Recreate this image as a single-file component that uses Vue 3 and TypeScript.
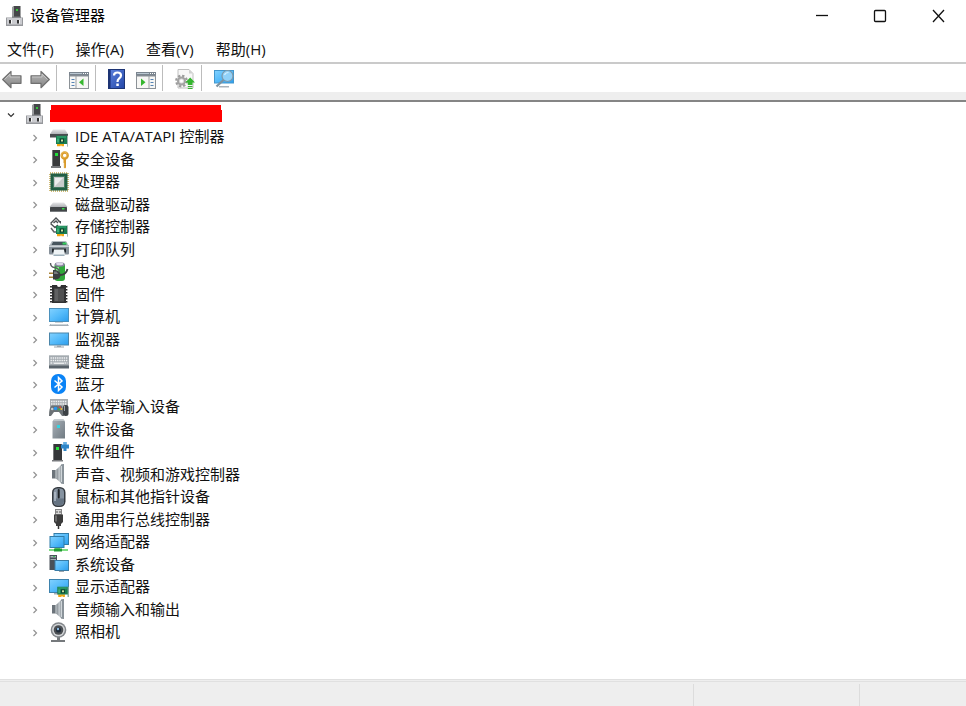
<script setup lang="ts">
import { ref } from 'vue'

interface Device {
  name: string
  icon: string
}

interface Tool {
  name: string
  icon: string
}

const menus: string[] = ['文件(F)', '操作(A)', '查看(V)', '帮助(H)']

const toolGroups: Tool[][] = [
  [
    { name: '后退', icon: 'back' },
    { name: '前进', icon: 'forward' },
  ],
  [{ name: '显示/隐藏控制台树', icon: 'pane-left' }],
  [
    { name: '帮助', icon: 'help' },
    { name: '显示/隐藏操作窗格', icon: 'pane-right' },
  ],
  [{ name: '更新驱动程序', icon: 'update' }],
  [{ name: '扫描检测硬件改动', icon: 'scan' }],
]

const devices: Device[] = [
  { name: 'IDE ATA/ATAPI 控制器', icon: 'ide' },
  { name: '安全设备', icon: 'security' },
  { name: '处理器', icon: 'cpu' },
  { name: '磁盘驱动器', icon: 'disk' },
  { name: '存储控制器', icon: 'storage' },
  { name: '打印队列', icon: 'printer' },
  { name: '电池', icon: 'battery' },
  { name: '固件', icon: 'firmware' },
  { name: '计算机', icon: 'computer' },
  { name: '监视器', icon: 'monitor' },
  { name: '键盘', icon: 'keyboard' },
  { name: '蓝牙', icon: 'bluetooth' },
  { name: '人体学输入设备', icon: 'hid' },
  { name: '软件设备', icon: 'soft-device' },
  { name: '软件组件', icon: 'soft-component' },
  { name: '声音、视频和游戏控制器', icon: 'speaker' },
  { name: '鼠标和其他指针设备', icon: 'mouse' },
  { name: '通用串行总线控制器', icon: 'usb' },
  { name: '网络适配器', icon: 'network' },
  { name: '系统设备', icon: 'system' },
  { name: '显示适配器', icon: 'display' },
  { name: '音频输入和输出', icon: 'speaker' },
  { name: '照相机', icon: 'camera' },
]

const open = ref<boolean>(true)
</script>

<template>
  <div class="window">
    <svg class="sprite" aria-hidden="true">
      <defs>
        <linearGradient id="g-screen" x1="0" y1="0" x2="1" y2="1">
          <stop offset="0" stop-color="#7fd0ff" />
          <stop offset="0.5" stop-color="#55bbfa" />
          <stop offset="1" stop-color="#2e9fee" />
        </linearGradient>
        <linearGradient id="g-metal" x1="0" y1="0" x2="0" y2="1">
          <stop offset="0" stop-color="#e6e6e8" />
          <stop offset="1" stop-color="#b0b2b6" />
        </linearGradient>
        <linearGradient id="g-slate" x1="0" y1="0" x2="1" y2="1">
          <stop offset="0" stop-color="#a9b1b8" />
          <stop offset="1" stop-color="#707a82" />
        </linearGradient>
        <linearGradient id="g-arrow" x1="0" y1="0" x2="0" y2="1">
          <stop offset="0" stop-color="#b8b8b8" />
          <stop offset="1" stop-color="#858585" />
        </linearGradient>
        <linearGradient id="g-help" x1="0" y1="0" x2="1" y2="1">
          <stop offset="0" stop-color="#5b80dc" />
          <stop offset="1" stop-color="#2447a8" />
        </linearGradient>
        <linearGradient id="g-cone" x1="0" y1="0" x2="1" y2="0">
          <stop offset="0" stop-color="#737b82" />
          <stop offset="0.6" stop-color="#c4cace" />
          <stop offset="1" stop-color="#8c949a" />
        </linearGradient>

        <symbol id="manager" viewBox="0 0 20 20">
          <path d="M9 1l1-1h6.500v11H9z" fill="#454749" />
          <path d="M8 1l2-1v11H8z" fill="#9a9c9e" />
          <rect x="12" y="3" width="2" height="2" fill="#37c53c" />
          <path d="M8 10.500h9V12H8z" fill="#7b7d80" />
          <rect x="2" y="11.500" width="17" height="8.500" fill="#96989c" />
          <rect x="3" y="12" width="15" height="6.500" fill="#cbccd0" />
          <path d="M5 14h2v3.500H5zM13 14h2v3.500h-2z" fill="#333" />
          <path d="M7 14h1v3.500H7zM15 14h1v3.500h-1z" fill="#f7f7f7" />
        </symbol>

        <symbol id="card" viewBox="0 0 12 11">
          <path d="M1 8h7v3H5.500v-1H4.500v1H1z" fill="#f0a715" />
          <path d="M0 0h12v11h-1V8.500H0z" fill="#187e50" />
          <path d="M1 1h9v1H1zM1 3h2v4H1z" fill="#3dae78" />
          <rect x="4" y="3" width="4" height="4" fill="#0d4230" />
          <rect x="5" y="4" width="2" height="2" fill="#c9e7a1" />
          <path d="M11 0h1v11h-1z" fill="#a9b4b1" />
        </symbol>

        <symbol id="ide" viewBox="0 0 20 20">
          <path d="M4 2.500h12l3 4.500H1z" fill="url(#g-metal)" />
          <path d="M1 7h18v3.500H1z" fill="#4a4d50" />
          <use href="#card" x="7" y="8.500" width="12" height="11" />
        </symbol>

        <symbol id="security" viewBox="0 0 20 20">
          <path d="M3 1h8v16H3z" fill="#393b3d" />
          <path d="M3 1h1v16H3z" fill="#77797b" />
          <path d="M2 17h10v2H2z" fill="#77797c" />
          <rect x="6" y="4" width="3" height="3" fill="#21dd39" />
          <path d="M14.500 9.500h2.500v9l-1 1-1.500-1.500 1-1-1-1 1-1-1-1z" fill="#d99b2b" />
          <circle cx="15.700" cy="6.500" r="3" fill="none" stroke="#d99b2b" stroke-width="2.400" />
          <circle cx="15.200" cy="5.700" r="2.800" fill="none" stroke="#f5c96d" stroke-width="0.600" />
        </symbol>

        <symbol id="cpu" viewBox="0 0 20 20">
          <rect x="1" y="1" width="18" height="18" fill="none" stroke="#c2a64e" stroke-width="1.500" stroke-dasharray="1 1" />
          <rect x="1.500" y="1.500" width="17" height="17" fill="#235f45" />
          <rect x="4" y="4" width="12" height="12" fill="#447a61" />
          <rect x="5" y="5" width="10" height="10" fill="#c8cbcb" />
          <path d="M6 6h8l-8 8z" fill="#eceeee" />
        </symbol>

        <symbol id="disk" viewBox="0 0 20 20">
          <path d="M4 8.500h11l3.500 4.500H.5z" fill="url(#g-metal)" />
          <rect x="1" y="13" width="17" height="5" rx="0.500" fill="#424548" />
          <path d="M1 17h17v1H1z" fill="#777b7e" />
          <rect x="13" y="14" width="2.500" height="1.500" fill="#32df49" />
        </symbol>

        <symbol id="storage" viewBox="0 0 20 20">
          <path d="M1.500 6.500L7 1l4 4M1.500 6.500L6 10.500 9 8M4.500 6L7 4l2 2" fill="none" stroke="#4d5154" stroke-width="1.400" />
          <path d="M2 11l3 4h3" fill="none" stroke="#606468" stroke-width="1.500" />
          <path d="M9 4h3v3z" fill="#4d5154" />
          <use href="#card" x="7" y="8.500" width="12" height="11" />
        </symbol>

        <symbol id="printer" viewBox="0 0 20 20">
          <rect x="0" y="6" width="20" height="9.500" rx="1" fill="#87919a" />
          <path d="M3 2h14l3 5H0z" fill="#b3bbc0" />
          <path d="M4 3h12l1.500 3h-15z" fill="#46545c" />
          <rect x="13.500" y="3.500" width="4" height="2" fill="#33cf5b" />
          <path d="M0 7h20v1H0z" fill="#cbd2d6" />
          <path d="M3 9.500h14v4H3z" fill="#20282d" />
          <path d="M5 10.500h10l1 6H4z" fill="#eef3f5" />
          <path d="M4.500 15.500h11v1.500h-11z" fill="#9eb0bb" />
        </symbol>

        <symbol id="battery" viewBox="0 0 20 20">
          <rect x="5.500" y="1" width="10.500" height="18" rx="3" fill="#2fa83a" />
          <path d="M7 5h3v10H7z" fill="#8bea8b" />
          <ellipse cx="10.700" cy="2.500" rx="5" ry="2.200" fill="#8b84a0" />
          <ellipse cx="10.700" cy="1.800" rx="3.500" ry="1.500" fill="#ddd9e8" />
          <path d="M1.500 1q0 4 4 4.500t5 4" fill="none" stroke="#5a5e60" stroke-width="1.400" />
          <path d="M0 10.500h4V12H0zM0 14.500h4V16H0z" fill="#a98438" />
          <path d="M4 8h2.500q5 1 5 5t-5 4.500H4z" fill="#3b3e40" />
          <path d="M5 9.500h2.500l2 2.500H5z" fill="#777b7d" />
          <path d="M11 13q6 0 7.500-6" fill="none" stroke="#3b3e40" stroke-width="1.800" />
        </symbol>

        <symbol id="firmware" viewBox="0 0 20 20">
          <path d="M2 2v17M17.500 2v17" stroke="#222" stroke-width="1.800" stroke-dasharray="1.500 1.500" />
          <path d="M3 1h5q0 2 2 2t2-2h5v18H3z" fill="#303132" />
          <path d="M5 4.500h10v13H5z" fill="#4f5051" />
          <path d="M6 5h3v12H6z" fill="#606162" />
        </symbol>

        <symbol id="computer" viewBox="0 0 20 20">
          <rect x="0" y="1" width="20" height="14" fill="#4b91bd" />
          <rect x="1" y="2" width="18" height="12" fill="url(#g-screen)" />
          <path d="M6 15h8v1H6z" fill="#cbd0d4" />
          <path d="M1.500 17h17l1.500 2H0z" fill="#a3adb5" />
          <path d="M2 17h16v.8H2z" fill="#d8dfe4" />
        </symbol>

        <symbol id="monitor" viewBox="0 0 20 20">
          <rect x="0" y="3.500" width="20" height="13" fill="#4b86aa" />
          <rect x="1" y="4.500" width="18" height="11" fill="url(#g-screen)" />
          <path d="M8 16.500h4v1h3v1H5v-1h3z" fill="#9ca5ac" />
        </symbol>

        <symbol id="keyboard" viewBox="0 0 20 20">
          <rect x="0" y="3" width="20" height="12" fill="#a4abb0" />
          <path d="M0 3h20v1H0z" fill="#c0c5c8" />
          <path d="M1.500 6h17M1.500 8.500h17M1.500 11h3M15.500 11h3" stroke="#f0f2f3" stroke-width="1.300" stroke-dasharray="1.400 0.800" />
          <path d="M5 11.200h10" stroke="#f7f8f8" stroke-width="1.300" />
          <path d="M0 13.500h20v3H0z" fill="#59636b" />
        </symbol>

        <symbol id="bluetooth" viewBox="0 0 20 20">
          <rect x="2" y="0" width="15" height="20" rx="7" fill="#0a83f6" />
          <path d="M5.500 6.500L13 13 9.500 16.500V3.500L13 7l-7.500 6.500" fill="none" stroke="#fff" stroke-width="1.500" />
        </symbol>

        <symbol id="hid" viewBox="0 0 20 20">
          <rect x="1" y="2" width="18" height="9" fill="#a9adb0" />
          <path d="M2 4.500h16M2 7h16" stroke="#f0f1f2" stroke-width="1.400" stroke-dasharray="1.500 0.800" />
          <path d="M3 8.500h9q2 0 3 10.500h-2l-3-4H5l-3 4H0Q0 10 3 8.500z" fill="#6b7175" />
          <circle cx="3.200" cy="12" r="1.300" fill="#c6cace" />
          <circle cx="6.500" cy="11.500" r="1.800" fill="#2894ec" />
          <circle cx="11" cy="10.300" r="1" fill="#e14a3c" />
          <circle cx="12.300" cy="12" r="1" fill="#efbb35" />
          <circle cx="10" cy="12.500" r="1" fill="#36b34a" />
          <rect x="14" y="8" width="5.500" height="11" rx="2.500" fill="#3d4246" />
          <path d="M15.500 9v5" stroke="#9aa0a5" stroke-width="1" />
        </symbol>

        <symbol id="soft-device" viewBox="0 0 20 20">
          <path d="M5 .5h9.500l1.500 2v17H3.500v-17z" fill="url(#g-slate)" />
          <path d="M5 .5h9.500l1 1.500H4z" fill="#bec5c9" />
          <rect x="8" y="6" width="3" height="3" fill="#34d3e0" />
        </symbol>

        <symbol id="soft-component" viewBox="0 0 20 20">
          <path d="M4 2h9v16H4z" fill="#353739" />
          <path d="M4 2h1v16H4z" fill="#77797b" />
          <path d="M3 18h11v1.500H3z" fill="#77797c" />
          <rect x="7" y="5" width="3" height="3" fill="#24e33b" />
          <path d="M12 2.500h2.500V0h3v2.500H20v4h-2.500V9h-3V6.500H12z" fill="#2f86c8" />
          <path d="M14.500 0h3v2.500h-3z" fill="#62afe3" />
        </symbol>

        <symbol id="speaker" viewBox="0 0 20 20">
          <rect x="3" y="6" width="4" height="8.500" fill="#6c747b" />
          <path d="M7 6l5.500-5.500v19L7 14.500z" fill="url(#g-cone)" />
          <path d="M12 .5L14 0h1v20h-1l-2-.5z" fill="#8a939a" />
          <path d="M12 2h1v16h-1z" fill="#d0d6da" />
          <path d="M6.500 6h1v8.500h-1z" fill="#d4d9dc" />
        </symbol>

        <symbol id="mouse" viewBox="0 0 20 20">
          <rect x="3" y="0" width="13.500" height="20" rx="5.500" fill="#353a40" />
          <rect x="4.500" y="1.500" width="10.500" height="17" rx="4" fill="#8693a1" />
          <path d="M4.500 11.500h10.500v3q-1 4-5.200 4t-5.300-4z" fill="#657382" />
          <rect x="8.700" y="2" width="2" height="9.500" rx="1" fill="#202428" />
          <path d="M6 5v9" stroke="#b4becb" stroke-width="1.500" />
        </symbol>

        <symbol id="usb" viewBox="0 0 20 20">
          <rect x="6" y="0" width="7" height="6" fill="#858585" />
          <rect x="7" y="1" width="5" height="4" fill="#d8d8d8" />
          <path d="M7.500 2h1v2h-1zM10.500 2h1v2h-1z" fill="#555" />
          <path d="M5 5.500h9V13l-2 2v2H7v-2l-2-2z" fill="#3c3c3c" />
          <path d="M6 6.500h2v6H6z" fill="#696969" />
          <path d="M9.500 17v3" stroke="#333" stroke-width="1.500" />
        </symbol>

        <symbol id="network" viewBox="0 0 20 20">
          <rect x="4.500" y="1" width="15.500" height="12" fill="#317da9" />
          <rect x="5.500" y="2" width="13.500" height="10" fill="url(#g-screen)" />
          <rect x="0.500" y="4" width="15" height="12" fill="#317da9" />
          <rect x="1.500" y="5" width="13" height="10" fill="url(#g-screen)" />
          <path d="M6 16h5v1h8v2H0v-2h6z" fill="#7fdc82" />
          <path d="M5 16.500h8v3H5z" fill="#219c31" />
        </symbol>

        <symbol id="system" viewBox="0 0 20 20">
          <path d="M.5 1h7.500v15H.5z" fill="#495158" />
          <path d="M1.500 2h5.500v1.500H1.500zM1.500 5h5.500v1H1.500z" fill="#a8b0b5" />
          <rect x="4" y="2" width="2" height="1" fill="#38c75a" />
          <rect x="5.500" y="6" width="14.500" height="11" fill="#3a7ca6" />
          <rect x="6.500" y="7" width="12.500" height="9" fill="url(#g-screen)" />
          <path d="M10 17h5v1h-5z" fill="#9ca5ac" />
        </symbol>

        <symbol id="display" viewBox="0 0 20 20">
          <rect x="0" y="2" width="20" height="14" fill="#3d82ad" />
          <rect x="1" y="3" width="18" height="12" fill="url(#g-screen)" />
          <path d="M5 16h5v1.500H5z" fill="#a5afb5" />
          <use href="#card" x="8" y="9.500" width="12" height="10.500" />
        </symbol>

        <symbol id="camera" viewBox="0 0 20 20">
          <path d="M8 15h3v3h5v2H2v-2h6z" fill="#75797c" />
          <circle cx="9.500" cy="8" r="7.800" fill="#82868a" />
          <circle cx="9.500" cy="8" r="6.300" fill="#d3d5d7" />
          <circle cx="9.500" cy="8" r="4.800" fill="#4a4e52" />
          <circle cx="9.500" cy="8" r="2.500" fill="#1d2937" />
          <circle cx="9" cy="7" r="1.200" fill="#8bb7dc" />
        </symbol>

        <symbol id="back" viewBox="0 0 20 20">
          <path d="M.7 10.500L9 2.500v4.300h10v7.500H9v4.400z" fill="url(#g-arrow)" stroke="#707070" stroke-width="1.200" stroke-linejoin="round" />
          <path d="M2.500 10.500L8 5v3h10" fill="none" stroke="#c9c9c9" stroke-width="0.900" />
        </symbol>
        <symbol id="forward" viewBox="0 0 20 20">
          <path d="M19.300 10.500L11 2.500v4.300H1v7.500h10v4.400z" fill="url(#g-arrow)" stroke="#707070" stroke-width="1.200" stroke-linejoin="round" />
          <path d="M17.500 10.500L12 5v3H2" fill="none" stroke="#c9c9c9" stroke-width="0.900" />
        </symbol>

        <symbol id="pane-left" viewBox="0 0 20 20">
          <path d="M0 3h20v17H0z" fill="#8c9297" />
          <path d="M1 7.500h18V19H1z" fill="#f7f7f5" />
          <path d="M0 3h20v3.500H0z" fill="#7b858f" />
          <path d="M1 4h12v1H1z" fill="#bac7d1" />
          <path d="M14 4h1v1h-1zM16 4h1v1h-1zM18 4h1v1h-1z" fill="#fff" />
          <path d="M7 7v12" stroke="#9b9fa2" />
          <path d="M2.500 10.500h3M2.500 13.500h3M2.500 16.500h3" stroke="#5784b4" stroke-width="1.200" />
          <path d="M14.500 9.500v7.500L10 13.300z" fill="#36b72f" />
        </symbol>
        <symbol id="pane-right" viewBox="0 0 20 20">
          <path d="M0 3h20v17H0z" fill="#8c9297" />
          <path d="M1 7.500h18V19H1z" fill="#f7f7f5" />
          <path d="M0 3h20v3.500H0z" fill="#7b858f" />
          <path d="M1 4h12v1H1z" fill="#bac7d1" />
          <path d="M14 4h1v1h-1zM16 4h1v1h-1zM18 4h1v1h-1z" fill="#fff" />
          <path d="M13 7v12" stroke="#9b9fa2" />
          <path d="M14.500 10.500h3M14.500 13.500h3M14.500 16.500h3" stroke="#5784b4" stroke-width="1.200" />
          <path d="M5 9.500v7.500l4.500-3.700z" fill="#36b72f" />
        </symbol>

        <symbol id="help" viewBox="0 0 20 20">
          <rect x="0" y="0" width="17" height="20" fill="#1d3474" />
          <rect x="2" y="1" width="14" height="18" fill="url(#g-help)" />
          <path d="M2 1h1v18H2z" fill="#2a469b" />
          <path d="M6 6.500q0-3 3.500-3t3.500 3q0 1.500-1.800 2.800T9.500 13" fill="none" stroke="#fff" stroke-width="2.200" />
          <rect x="8.300" y="14.500" width="2.500" height="2.500" fill="#fff" />
        </symbol>

        <symbol id="update" viewBox="0 0 20 20">
          <path d="M3 .5h11l4 4V19H3z" fill="#f7f7f7" stroke="#c0c0c0" />
          <path d="M14 .5v4h4z" fill="#d0d0d0" />
          <circle cx="6.500" cy="12" r="5.300" fill="none" stroke="#9c9c9c" stroke-width="2.200" stroke-dasharray="2.300 1.860" />
          <circle cx="6.500" cy="12" r="3.500" fill="#ddd" stroke="#a2a2a2" stroke-width="2" />
          <circle cx="6.500" cy="12" r="1.500" fill="#fff" />
          <path d="M15.200 8.500l4.800 5h-2.500V16h-4.700v-2.500h-2.500zM12.800 17h4.700v1h-4.700zM12.800 19h4.700v1h-4.700z" fill="#35b52f" />
        </symbol>

        <symbol id="scan" viewBox="0 0 20 20">
          <rect x="0" y="1" width="20" height="13.500" fill="#4397cd" />
          <rect x="1" y="2" width="18" height="11.500" fill="url(#g-screen)" />
          <path d="M5 17h10v1.500H5z" fill="#aab3ba" />
          <path d="M9.500 11l-7 6.500" stroke="#7e929f" stroke-width="2.300" />
          <circle cx="13.500" cy="7" r="5.500" fill="#90d1f9" stroke="#7e98a9" stroke-width="1.200" />
          <path d="M10.500 6q1-2.500 4-2.500" fill="none" stroke="#d3efff" stroke-width="1.200" />
        </symbol>
      </defs>
    </svg>

    <header class="title-bar">
      <svg class="icon"><use href="#manager" /></svg>
      <h1 class="title">设备管理器</h1>
      <div class="window-controls">
        <button type="button" aria-label="最小化">
          <svg class="control" viewBox="0 0 14 14"><path d="M1 6.500h12" /></svg>
        </button>
        <button type="button" aria-label="最大化">
          <svg class="control" viewBox="0 0 14 14"><rect x="1.500" y="1.500" width="11" height="11" rx="1" /></svg>
        </button>
        <button type="button" aria-label="关闭">
          <svg class="control" viewBox="0 0 14 14"><path d="M2 1l11 12M13 1L2 13" /></svg>
        </button>
      </div>
    </header>

    <nav class="menu-bar">
      <button v-for="menu in menus" :key="menu" type="button">{{ menu }}</button>
    </nav>

    <div class="toolbar" role="toolbar">
      <div v-for="(group, index) in toolGroups" :key="index" class="tool-group">
        <button v-for="tool in group" :key="tool.icon" type="button" :aria-label="tool.name">
          <svg class="icon"><use :href="`#${tool.icon}`" /></svg>
        </button>
      </div>
    </div>

    <main class="content">
      <ul class="tree">
        <li class="row root">
          <button type="button" class="toggle" aria-label="展开或折叠" :aria-expanded="open" @click="open = !open">
            <svg class="chevron open" viewBox="0 0 8 8"><path d="M1 2.500l3 3 3-3" /></svg>
          </button>
          <svg class="icon"><use href="#manager" /></svg>
          <span class="computer-name"></span>
        </li>
        <template v-if="open">
          <li v-for="device in devices" :key="device.name" class="row child">
            <button type="button" class="toggle" :aria-label="device.name">
              <svg class="chevron" viewBox="0 0 8 8"><path d="M2.500 1l3 3-3 3" /></svg>
            </button>
            <svg class="icon"><use :href="`#${device.icon}`" /></svg>
            <span class="label">{{ device.name }}</span>
          </li>
        </template>
      </ul>
    </main>

    <footer class="status-bar">
      <div class="status-cell"></div>
      <div class="status-cell"></div>
      <div class="status-cell"></div>
    </footer>
  </div>
</template>

<style>
body {
  margin: 0;
  background: #fff;
}
</style>

<style scoped>
.window {
  display: flex;
  flex-direction: column;
  min-height: 100vh;
  background: #fff;
  color: #111;
  font-family: 'Open Sans', 'Noto Sans CJK SC', sans-serif;
  font-size: 15px;
  line-height: 22px;
}

.sprite {
  position: absolute;
  width: 0;
  height: 0;
}

button {
  margin: 0;
  padding: 0;
  border: 0;
  background: none;
  color: inherit;
  font: inherit;
}

.icon {
  display: block;
  flex: none;
  width: 20px;
  height: 20px;
}

.title-bar {
  display: flex;
  align-items: center;
  gap: 6px;
  height: 32px;
  padding-left: 4px;
}

.title {
  margin: 0;
  padding-bottom: 2px;
  color: #000;
  font-size: 15px;
  font-weight: 400;
}

.window-controls {
  display: flex;
  align-self: stretch;
  margin-left: auto;
}

.window-controls button {
  display: flex;
  align-items: center;
  justify-content: center;
  width: 58px;
  padding-left: 2px;
}

.control {
  width: 14px;
  height: 14px;
  fill: none;
  stroke: #111;
  stroke-width: 1.3;
}

.menu-bar {
  display: flex;
  gap: 22px;
  height: 30px;
  padding-left: 7px;
  border-bottom: 2px solid #cacaca;
}

.menu-bar button {
  padding-top: 3px;
}

.toolbar {
  display: flex;
  align-items: center;
  height: 28px;
  border-bottom: 8px solid #eee;
}

.tool-group {
  display: flex;
  align-items: center;
  gap: 8px;
  height: 24px;
  padding: 2px 6px 0 12px;
  border-right: 1px solid #bcbcbc;
}

.tool-group:first-child {
  padding-left: 2px;
}

.tool-group:last-child {
  border-right: 0;
}

.content {
  flex: 1;
  border-top: 2px solid #858585;
}

.tree {
  display: grid;
  grid-auto-rows: 22px 23px;
  margin: 0;
  padding: 1px 0 0;
  list-style: none;
}

.row {
  display: flex;
  align-items: center;
}

.root {
  padding-left: 4px;
}

.child {
  padding-left: 28px;
}

.toggle {
  display: flex;
  align-items: center;
  justify-content: center;
  width: 14px;
  height: 20px;
  padding-top: 2px;
  margin-right: 7px;
}

.root .toggle {
  margin-right: 6px;
}

.chevron {
  width: 8px;
  height: 8px;
  fill: none;
  stroke: #929292;
  stroke-width: 1.2;
}

.chevron.open {
  stroke: #333;
}

.label {
  margin-left: 6px;
  padding-bottom: 1px;
  white-space: nowrap;
}

.computer-name {
  align-self: flex-start;
  width: 172px;
  height: 17px;
  margin: 2px 0 0 6px;
  background: #f00;
  clip-path: polygon(1px 0, 171px 0, 171px 5px, 100% 5px, 100% 100%, 0 100%, 0 5px, 1px 5px);
}

.status-bar {
  display: flex;
  height: 22px;
  padding-top: 2px;
  background: #eee;
  border-top: 3px double #e0e0e0;
}

.status-cell {
  flex: none;
  width: 106px;
}

.status-cell:first-child {
  flex: 1;
}

.status-cell:nth-child(2) {
  width: 165px;
}

.status-cell + .status-cell {
  border-left: 1px solid #dcdcdc;
}
</style>
